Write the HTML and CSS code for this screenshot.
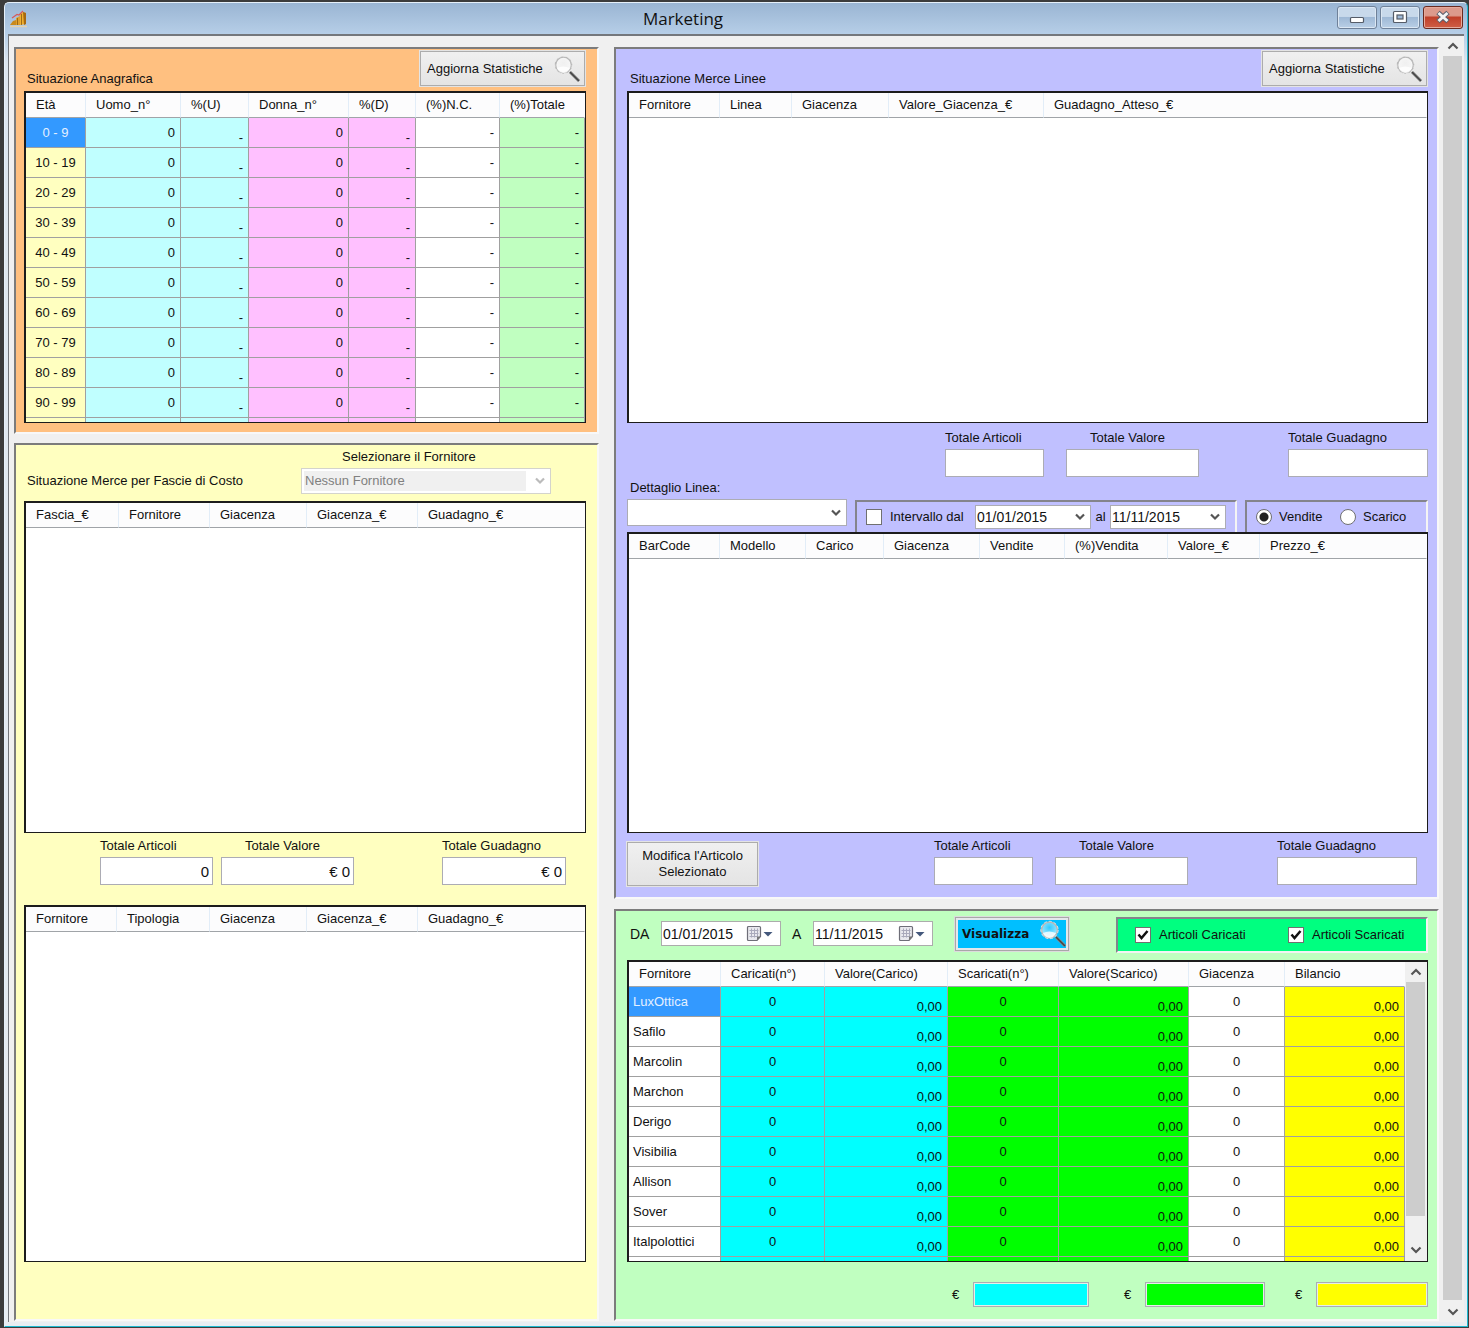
FILE: index.html
```html
<!DOCTYPE html>
<html lang="it">
<head>
<meta charset="utf-8">
<title>Marketing</title>
<link rel="stylesheet" href="styles.css">
</head>
<body>
<svg class="defs" aria-hidden="true">
  <defs>
    <radialGradient id="glass" cx="50%" cy="35%" r="65%">
      <stop offset="0" stop-color="#fff" stop-opacity=".2"/>
      <stop offset=".7" stop-color="#fff" stop-opacity=".55"/>
      <stop offset="1" stop-color="#e8e8e8"/>
    </radialGradient>
    <symbol id="lens" viewBox="0 0 28 28">
      <path d="M17 17 L26 26" stroke="#8a8a8a" stroke-width="3"/>
      <path d="M17 17 L26 26" stroke="#444" stroke-width="1.5"/>
      <circle cx="10.500" cy="10" r="8" fill="url(#glass)" stroke="#b8b8b8" stroke-width="1.600"/>
      <path d="M4 13 Q10 10 17 13 Q15 18 10 18 Q5 17 4 13Z" fill="#fff" opacity=".8"/>
      <circle cx="10.500" cy="10" r="8.700" fill="none" stroke="#eee" stroke-width=".8" stroke-dasharray="3 2"/>
    </symbol>
    <symbol id="calendar" viewBox="0 0 28 18">
      <path d="M2.500 1.500h11a1 1 0 0 1 1 1v9l-3.500 4H2.500a1 1 0 0 1-1-1v-12a1 1 0 0 1 1-1z" fill="#e9e9ee" stroke="#6e6e78" stroke-width="1.200"/>
      <path d="M3.500 5.500h9M3.500 8.500h9M3.500 11.500h8M5.500 3.500v9M8.500 3.500v9M11.500 3.500v8" stroke="#aab" stroke-width="1"/>
      <path d="M14.500 11.500h-3.500v4z" fill="#777"/>
      <path d="M17.500 7h9l-4.500 4.500z" fill="#44587c"/>
    </symbol>
    <symbol id="up" viewBox="0 0 12 8"><path d="M1.500 6.500 L6 2 L10.500 6.500" fill="none" stroke="#555" stroke-width="2.200"/></symbol>
    <symbol id="down" viewBox="0 0 12 8"><path d="M1.500 1.500 L6 6 L10.500 1.500" fill="none" stroke="#555" stroke-width="2.200"/></symbol>
  </defs>
</svg>

<div class="window">
  <header class="titlebar">
    <svg class="appicon" viewBox="0 0 20 18" aria-hidden="true">
      <path d="M1 15 L4 11 L7 10 V15Z" fill="#c98a1c"/>
      <path d="M7 15 V8 L11 6 V15Z" fill="#e0a02c"/>
      <path d="M11 15 V4 L14 2 L17 3 V14Z" fill="#f0b030"/>
      <path d="M14 2 L17 3 V14 L15 15Z" fill="#a86a10"/>
      <path d="M8.500 15V8M12.500 15V4" stroke="#8a5a10" stroke-width=".8"/>
      <path d="M3 8 L8 4.500 L10 5 L14 1" fill="none" stroke="#d65a5a" stroke-width="1.200"/>
      <path d="M1 16.500H18" stroke="#e6d2ae" stroke-width="1.500"/>
    </svg>
    <h1>Marketing</h1>
    <div class="controls">
      <button type="button" class="ctl" aria-label="Riduci"><svg viewBox="0 0 38 20"><rect x="12.500" y="10.500" width="13" height="5" rx="1" fill="#fff" stroke="#555c68" stroke-width="1.200"/></svg></button>
      <button type="button" class="ctl" aria-label="Ingrandisci"><svg viewBox="0 0 38 20"><rect x="12.500" y="4.500" width="13" height="11" rx="1" fill="#fff" stroke="#555c68" stroke-width="1.200"/><rect x="16" y="8" width="6" height="4" fill="#9db9d8" stroke="#555c68" stroke-width="1.200"/></svg></button>
      <button type="button" class="ctl close" aria-label="Chiudi"><svg viewBox="0 0 38 20"><path d="M14 5.500 L24 14.500 M24 5.500 L14 14.500" stroke="#5a5f6e" stroke-width="5"/><path d="M14.500 6 L23.500 14 M23.500 6 L14.500 14" stroke="#f4f4f4" stroke-width="3"/></svg></button>
    </div>
  </header>

  <div class="client">
    <main class="panels">
      <div class="column left">
        <section class="panel orange">
          <div class="head">
            <h2>Situazione Anagrafica</h2>
            <button type="button" class="btn refresh">Aggiorna Statistiche <svg class="lens"><use href="#lens"/></svg></button>
          </div>
          <div class="grid">
            <table class="ages">
              <colgroup><col style="width:60px"><col style="width:95px"><col style="width:68px"><col style="width:100px"><col style="width:67px"><col style="width:84px"><col style="width:85px"></colgroup>
              <thead><tr><th>Età</th><th>Uomo_n°</th><th>%(U)</th><th>Donna_n°</th><th>%(D)</th><th>(%)N.C.</th><th>(%)Totale</th></tr></thead>
              <tbody>
                <tr><td class="selected">0 - 9</td><td>0</td><td>-</td><td>0</td><td>-</td><td>-</td><td>-</td></tr>
                <tr><td>10 - 19</td><td>0</td><td>-</td><td>0</td><td>-</td><td>-</td><td>-</td></tr>
                <tr><td>20 - 29</td><td>0</td><td>-</td><td>0</td><td>-</td><td>-</td><td>-</td></tr>
                <tr><td>30 - 39</td><td>0</td><td>-</td><td>0</td><td>-</td><td>-</td><td>-</td></tr>
                <tr><td>40 - 49</td><td>0</td><td>-</td><td>0</td><td>-</td><td>-</td><td>-</td></tr>
                <tr><td>50 - 59</td><td>0</td><td>-</td><td>0</td><td>-</td><td>-</td><td>-</td></tr>
                <tr><td>60 - 69</td><td>0</td><td>-</td><td>0</td><td>-</td><td>-</td><td>-</td></tr>
                <tr><td>70 - 79</td><td>0</td><td>-</td><td>0</td><td>-</td><td>-</td><td>-</td></tr>
                <tr><td>80 - 89</td><td>0</td><td>-</td><td>0</td><td>-</td><td>-</td><td>-</td></tr>
                <tr><td>90 - 99</td><td>0</td><td>-</td><td>0</td><td>-</td><td>-</td><td>-</td></tr>
                <tr class="stub"><td></td><td></td><td></td><td></td><td></td><td></td><td></td></tr>
              </tbody>
            </table>
          </div>
        </section>

        <section class="panel yellow">
          <div class="supplier">
            <h2>Situazione Merce per Fascie di Costo</h2>
            <div class="pick">
              <label for="fornitore">Selezionare il Fornitore</label>
              <select id="fornitore" class="combo" disabled><option>Nessun Fornitore</option></select>
            </div>
          </div>
          <div class="grid tall">
            <table>
              <colgroup><col style="width:93px"><col style="width:91px"><col style="width:97px"><col style="width:111px"><col></colgroup>
              <thead><tr><th>Fascia_€</th><th>Fornitore</th><th>Giacenza</th><th>Giacenza_€</th><th>Guadagno_€</th></tr></thead>
            </table>
          </div>
          <div class="totals first">
            <div class="total a"><label for="y1">Totale Articoli</label><input id="y1" type="text" value="0"></div>
            <div class="total b"><label for="y2">Totale Valore</label><input id="y2" type="text" value="€ 0"></div>
            <div class="total c"><label for="y3">Totale Guadagno</label><input id="y3" type="text" value="€ 0"></div>
          </div>
          <div class="grid types">
            <table>
              <colgroup><col style="width:91px"><col style="width:93px"><col style="width:97px"><col style="width:111px"><col></colgroup>
              <thead><tr><th>Fornitore</th><th>Tipologia</th><th>Giacenza</th><th>Giacenza_€</th><th>Guadagno_€</th></tr></thead>
            </table>
          </div>
        </section>
      </div>

      <div class="column right">
        <section class="panel purple">
          <div class="head">
            <h2>Situazione Merce Linee</h2>
            <button type="button" class="btn refresh">Aggiorna Statistiche <svg class="lens"><use href="#lens"/></svg></button>
          </div>
          <div class="grid tall">
            <table>
              <colgroup><col style="width:91px"><col style="width:72px"><col style="width:97px"><col style="width:155px"><col></colgroup>
              <thead><tr><th>Fornitore</th><th>Linea</th><th>Giacenza</th><th>Valore_Giacenza_€</th><th>Guadagno_Atteso_€</th></tr></thead>
            </table>
          </div>
          <div class="totals lines">
            <div class="total a"><label for="p1">Totale Articoli</label><input id="p1" type="text"></div>
            <div class="total b"><label for="p2">Totale Valore</label><input id="p2" type="text"></div>
            <div class="total c"><label for="p3">Totale Guadagno</label><input id="p3" type="text"></div>
          </div>
          <div class="filters">
            <div class="line">
              <label for="linea">Dettaglio Linea:</label>
              <select id="linea" class="combo"><option></option></select>
            </div>
            <div class="box interval">
              <input type="checkbox" id="intervallo"><label for="intervallo">Intervallo dal</label>
              <select class="combo date" aria-label="Data iniziale"><option>01/01/2015</option></select>
              <span>al</span>
              <select class="combo date" aria-label="Data finale"><option>11/11/2015</option></select>
            </div>
            <div class="box mode">
              <input type="radio" name="mode" id="vendite" checked><label for="vendite">Vendite</label>
              <input type="radio" name="mode" id="scarico"><label for="scarico">Scarico</label>
            </div>
          </div>
          <div class="grid detail">
            <table>
              <colgroup><col style="width:91px"><col style="width:86px"><col style="width:78px"><col style="width:96px"><col style="width:85px"><col style="width:103px"><col style="width:92px"><col></colgroup>
              <thead><tr><th>BarCode</th><th>Modello</th><th>Carico</th><th>Giacenza</th><th>Vendite</th><th>(%)Vendita</th><th>Valore_€</th><th>Prezzo_€</th></tr></thead>
            </table>
          </div>
          <div class="totals last">
            <button type="button" class="btn edit">Modifica l'Articolo Selezionato</button>
            <div class="total a"><label for="q1">Totale Articoli</label><input id="q1" type="text"></div>
            <div class="total b"><label for="q2">Totale Valore</label><input id="q2" type="text"></div>
            <div class="total c"><label for="q3">Totale Guadagno</label><input id="q3" type="text"></div>
          </div>
        </section>

        <section class="panel green">
          <div class="range">
            <label for="da">DA</label>
            <span class="datebox"><input id="da" type="text" value="01/01/2015"><svg><use href="#calendar"/></svg></span>
            <label for="a">A</label>
            <span class="datebox"><input id="a" type="text" value="11/11/2015"><svg><use href="#calendar"/></svg></span>
            <button type="button" class="show">Visualizza <svg class="lens"><use href="#lens"/></svg></button>
            <div class="box articles">
              <input type="checkbox" id="caricati" checked><label for="caricati">Articoli Caricati</label>
              <input type="checkbox" id="scaricati" checked><label for="scaricati">Articoli Scaricati</label>
            </div>
          </div>
          <div class="grid scrolls">
            <table class="suppliers">
              <colgroup><col style="width:92px"><col style="width:104px"><col style="width:123px"><col style="width:111px"><col style="width:130px"><col style="width:96px"><col style="width:120px"></colgroup>
              <thead><tr><th>Fornitore</th><th>Caricati(n°)</th><th>Valore(Carico)</th><th>Scaricati(n°)</th><th>Valore(Scarico)</th><th>Giacenza</th><th>Bilancio</th></tr></thead>
              <tbody>
                <tr><td class="selected">LuxOttica</td><td>0</td><td>0,00</td><td>0</td><td>0,00</td><td>0</td><td>0,00</td></tr>
                <tr><td>Safilo</td><td>0</td><td>0,00</td><td>0</td><td>0,00</td><td>0</td><td>0,00</td></tr>
                <tr><td>Marcolin</td><td>0</td><td>0,00</td><td>0</td><td>0,00</td><td>0</td><td>0,00</td></tr>
                <tr><td>Marchon</td><td>0</td><td>0,00</td><td>0</td><td>0,00</td><td>0</td><td>0,00</td></tr>
                <tr><td>Derigo</td><td>0</td><td>0,00</td><td>0</td><td>0,00</td><td>0</td><td>0,00</td></tr>
                <tr><td>Visibilia</td><td>0</td><td>0,00</td><td>0</td><td>0,00</td><td>0</td><td>0,00</td></tr>
                <tr><td>Allison</td><td>0</td><td>0,00</td><td>0</td><td>0,00</td><td>0</td><td>0,00</td></tr>
                <tr><td>Sover</td><td>0</td><td>0,00</td><td>0</td><td>0,00</td><td>0</td><td>0,00</td></tr>
                <tr><td>Italpolottici</td><td>0</td><td>0,00</td><td>0</td><td>0,00</td><td>0</td><td>0,00</td></tr>
                <tr class="stub"><td></td><td></td><td></td><td></td><td></td><td></td><td></td></tr>
              </tbody>
            </table>
            <div class="scrollbar inner"><svg><use href="#up"/></svg><div class="thumb"></div><svg><use href="#down"/></svg></div>
          </div>
          <div class="sums">
            <label for="s1">€</label><input id="s1" class="cyan" type="text">
            <label for="s2">€</label><input id="s2" class="lime" type="text">
            <label for="s3">€</label><input id="s3" class="gold" type="text">
          </div>
        </section>
      </div>
    </main>
    <div class="scrollbar outer"><svg><use href="#up"/></svg><div class="thumb"></div><svg><use href="#down"/></svg></div>
  </div>
</div>
</body>
</html>
```
FILE: styles.css
```css
* { box-sizing: border-box; }

body {
  margin: 0;
  min-height: 100vh;
  display: flex;
  padding: 2px 1px 1px 4px;
  background: #3c3c3c;
  color: #111;
  font: 13px/16px "Liberation Sans", Arial, sans-serif;
}

h1, h2 { margin: 0; font-weight: normal; }
h2 { font-size: 13px; line-height: 16px; }

button, input, select { font: inherit; color: inherit; }

.defs { position: absolute; width: 0; height: 0; }

/* Window frame */
.window {
  flex: 1;
  display: flex;
  flex-direction: column;
  padding: 0 3px 4px;
  border: 1px solid #e6f0fa;
  border-right-color: #1fb8d0;
  border-bottom-color: #1fb8d0;
  border-radius: 5px 5px 0 0;
  background: linear-gradient(#9ab5d3, #b7cfe8 32px, #dde6ef 60px, #e8edf2);
}

.titlebar {
  display: flex;
  align-items: flex-start;
  height: 31px;
}

.appicon { width: 20px; height: 18px; margin: 7px 0 0 1px; }

.titlebar h1 {
  flex: 1;
  text-align: center;
  font: 17px/31px "Open Sans", "Noto Sans", sans-serif;
}

.controls { display: flex; gap: 3px; padding: 3px 1px 0 0; }

.ctl {
  display: flex;
  width: 40px;
  height: 23px;
  padding: 0;
  border: 1px solid #6f8199;
  border-radius: 3px;
  background: linear-gradient(#c8d9eb 45%, #9fb9d6 50%, #b9cfe6);
  box-shadow: inset 0 0 0 1px #dbe7f3;
}

.ctl svg { width: 38px; height: 20px; }

.ctl.close {
  border-color: #6a2a20;
  background: linear-gradient(#dc9a8c 40%, #c0402a 50%, #cf5e46);
  box-shadow: inset 0 0 0 1px #e6aa9c;
}

.client {
  flex: 1;
  display: flex;
  padding: 0 2px 0 0;
  border: 2px solid #74777c;
  border-width: 2px 0 0 1px;
  background: #f0f0f0;
}

.panels {
  flex: 1;
  display: grid;
  grid-template-columns: 585fr 825fr;
  gap: 15px;
  padding: 11px 4px 1px 5px;
}

.column { display: flex; flex-direction: column; min-width: 0; }
.left { gap: 9px; }
.right { gap: 10px; }

/* Sunken panels */
.panel {
  padding: 0 11px 0 8px;
  border: 2px solid #7c7c7c;
  border-right-color: #f8f8f8;
  border-bottom-color: #f8f8f8;
}

.orange { background: #ffc080; padding-bottom: 9px; }
.yellow { background: #ffffc0; flex: 1; }
.purple { background: #c0c0ff; }
.green { background: #c0ffc0; flex: 1; }
.purple, .green { padding-left: 11px; padding-right: 9px; }

.head {
  display: flex;
  justify-content: space-between;
  align-items: flex-start;
  height: 42px;
  padding: 2px 1px 0 3px;
}

.head h2 { padding-top: 20px; }

.btn {
  border: 1px solid #acacac;
  outline: 1px solid #e4e4e4;
  background: linear-gradient(#f0f0f0, #e4e4e4);
}

.refresh {
  display: flex;
  align-items: center;
  justify-content: space-between;
  width: 165px;
  height: 35px;
  padding: 0 3px 0 6px;
  white-space: nowrap;
}

.lens { width: 28px; height: 28px; flex: none; }

/* Grids */
.grid {
  display: flex;
  align-items: flex-start;
  border: 1px solid #1c1c1c;
  border-width: 2px 1px 1px 2px;
  background: #fff;
}

.tall { min-height: 332px; }
.types { min-height: 357px; }
.detail { min-height: 301px; }

table {
  width: 100%;
  table-layout: fixed;
  border-collapse: separate;
  border-spacing: 0;
}

th {
  height: 25px;
  padding: 0 0 0 10px;
  border-right: 1px solid #e2edf8;
  border-bottom: 1px solid #a0a4a8;
  background: #fcfcfd;
  font-weight: normal;
  text-align: left;
  white-space: nowrap;
}

th:last-child { border-right-color: transparent; }

td {
  height: 30px;
  padding: 0 5px;
  border-right: 1px solid #a0a0a0;
  border-bottom: 1px solid #a0a0a0;
  text-align: right;
  white-space: nowrap;
}

.stub td { height: 4px; padding: 0; border-bottom: 0; }

.ages td:nth-child(1) { background: #ffffc0; text-align: center; }
.ages td:nth-child(2), .ages td:nth-child(3) { background: #c0ffff; }
.ages td:nth-child(4), .ages td:nth-child(5) { background: #ffc0ff; }
.ages td:nth-child(7) { background: #c0ffc0; }
.ages tr:not(.stub) td:nth-child(3), .ages tr:not(.stub) td:nth-child(5) { vertical-align: bottom; padding-bottom: 1px; }

.suppliers td:nth-child(1) { text-align: left; padding-left: 4px; }
.suppliers td:nth-child(even) { text-align: center; }
.suppliers td:nth-child(6) { background: #fff; }
.suppliers td:nth-child(2), .suppliers td:nth-child(3) { background: #0ff; }
.suppliers td:nth-child(4), .suppliers td:nth-child(5) { background: #0f0; }
.suppliers td:nth-child(7) { background: #ff0; }
.suppliers tr:not(.stub) td:nth-child(odd):not(:first-child) { vertical-align: bottom; padding-bottom: 1px; }

.ages td.selected, .suppliers td.selected { background: #3399ff; color: #e4f0ff; }

/* Fields */
input[type="text"], .combo {
  border: 1px solid #acacb4;
  border-radius: 0;
  background-color: #fff;
}

.combo {
  appearance: none;
  height: 26px;
  padding: 0 20px 0 3px;
  background-image: url("data:image/svg+xml,%3Csvg xmlns='http://www.w3.org/2000/svg' width='10' height='8'%3E%3Cpath d='M1 1.500L5 5.500L9 1.500' fill='none' stroke='%23555' stroke-width='2.200'/%3E%3C/svg%3E");
  background-repeat: no-repeat;
  background-position: right 5px center;
}

.combo:disabled {
  opacity: 1;
  color: #808080;
  border-color: #d4d4cc;
  background-image: url("data:image/svg+xml,%3Csvg xmlns='http://www.w3.org/2000/svg' width='10' height='8'%3E%3Cpath d='M1 1.500L5 5.500L9 1.500' fill='none' stroke='%23bbb' stroke-width='2.200'/%3E%3C/svg%3E"), linear-gradient(#f0f0f0, #f0f0f0);
  background-size: 10px 8px, calc(100% - 26px) 20px;
  background-position: right 5px center, left 2px center;
}

.supplier { display: flex; height: 56px; padding: 4px 0 0 3px; }
.supplier h2 { width: 274px; padding-top: 24px; }
.pick { display: flex; flex-direction: column; gap: 3px; width: 250px; }
.pick label { padding-left: 41px; }

.totals { display: flex; align-items: flex-start; padding-top: 5px; }
.total { display: flex; flex-direction: column; gap: 3px; }
.total input { height: 28px; width: 100%; padding: 0 3px; font-size: 15px; text-align: right; }
.total.a { width: 99px; }
.total.b { width: 133px; margin-left: 22px; }
.total.b label { padding-left: 24px; }
.total.c { width: 140px; margin-left: auto; }

.first { height: 72px; padding-right: 20px; padding-left: 76px; }
.first .total.a { width: 113px; }
.first .total.b { margin-left: 8px; }
.first .total.c { width: 124px; }

.lines { padding: 7px 0 0 318px; height: 57px; }

.last { padding: 5px 11px 0 0; height: 64px; }
.last .total.a { margin-left: 176px; }

.edit { width: 131px; height: 44px; margin-top: 4px; padding: 0 8px; }

.filters { display: flex; align-items: flex-end; height: 52px; }
.line { display: flex; flex-direction: column; gap: 3px; width: 220px; padding-bottom: 6px; }
.line label { padding-left: 3px; }
.line .combo { height: 27px; }

.box {
  display: flex;
  align-items: center;
  border: 2px solid #84848c;
  border-right-color: #f4f4f4;
  border-bottom-color: #f4f4f4;
}

.interval, .mode { height: 32px; border-bottom: 0; }
.interval { width: 382px; margin-left: 8px; padding-left: 9px; }
.interval .date { width: 116px; height: 24px; padding-left: 1px; font-size: 14px; }
.interval label { width: 85px; }
.interval span { width: 19px; text-align: center; }
.mode { flex: 1; margin-left: 8px; padding-left: 9px; }
.mode label { width: 61px; }

input[type="checkbox"], input[type="radio"] {
  appearance: none;
  flex: none;
  width: 16px;
  height: 16px;
  margin: 0 8px 0 0;
  border: 1px solid #707070;
  background: #fff;
}

input[type="checkbox"]:checked {
  background: #fff url("data:image/svg+xml,%3Csvg xmlns='http://www.w3.org/2000/svg' width='14' height='14'%3E%3Cpath d='M2.500 6.500L5.500 10L11.500 3' fill='none' stroke='%23111' stroke-width='2.500'/%3E%3C/svg%3E") no-repeat center;
}

input[type="radio"] { margin-right: 7px; border-radius: 50%; }
input[type="radio"]:checked { background: radial-gradient(circle, #222 4px, #fff 5px); }

/* Date range bar */
.range { display: flex; align-items: flex-start; height: 49px; padding: 6px 0 0 3px; }
.range > label { padding-top: 9px; font-size: 14px; }
.range > label:first-child { width: 31px; }
.range > label:nth-of-type(2) { width: 21px; margin-left: 11px; }

.datebox {
  display: flex;
  align-items: center;
  width: 120px;
  height: 25px;
  margin-top: 4px;
  padding: 0 6px 0 1px;
  border: 1px solid #acacac;
  background: #fff;
}

.datebox input[type="text"] { flex: 1; min-width: 0; padding: 0; border: 0; font-size: 14px; }
.datebox svg { width: 28px; height: 18px; flex: none; }

.show {
  display: flex;
  align-items: center;
  justify-content: space-between;
  width: 114px;
  height: 34px;
  margin-left: 22px;
  padding: 0 1px 0 6px;
  border: 1px solid #a8a8a8;
  outline: 1px solid #dcdcdc;
  background: #00bfff;
  box-shadow: inset 0 0 0 2px #e4e8ec;
  font: bold 12px/16px "DejaVu Sans", sans-serif;
}

.articles { width: 312px; height: 36px; margin-left: auto; padding-left: 17px; background: #00ff80; }
.articles label { width: 129px; white-space: nowrap; }
.articles label:last-child { width: auto; }

/* Scroll bars */
.scrollbar {
  align-self: stretch;
  display: flex;
  flex-direction: column;
  align-items: center;
  flex: none;
  background: #f0f0f0;
}

.scrollbar svg { width: 12px; height: 8px; }
.thumb { flex: 1; width: 100%; background: #cdcdcd; }
.inner { width: 22px; padding: 6px 2px 7px 1px; }
.inner .thumb { margin: 6px 0 30px; }
.outer { width: 19px; padding: 6px 0; }
.outer .thumb { margin: 6px 0 8px; }

.sums { display: flex; justify-content: flex-end; align-items: center; padding-top: 20px; }
.sums label { width: 21px; }
.sums input { height: 25px; box-shadow: inset 0 0 0 1px #e4f0e8; }
.sums .cyan { width: 116px; margin-right: 35px; background: #0ff; }
.sums .lime { width: 120px; margin-right: 30px; background: #0f0; }
.sums .gold { width: 112px; background: #ff0; }
```
